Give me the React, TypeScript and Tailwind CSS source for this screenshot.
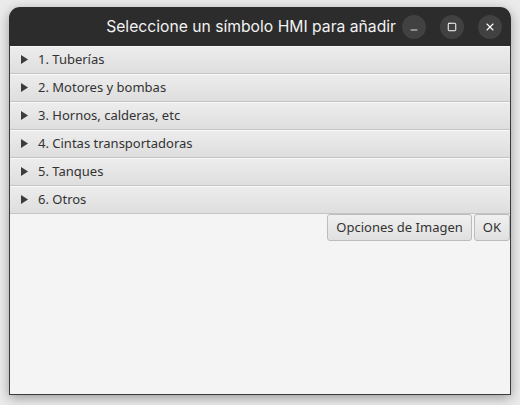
import { Minus, Square, X } from "lucide-react";

const SECTIONS = [
  "1. Tuberías",
  "2. Motores y bombas",
  "3. Hornos, calderas, etc",
  "4. Cintas transportadoras",
  "5. Tanques",
  "6. Otros",
];

function SectionHeader({ label }: { label: string }) {
  return (
    <div className="flex h-[28px] items-center border-b border-[#c4c4c4] bg-gradient-to-b from-[#ededed] to-[#dedede] pl-[11px] shadow-[inset_0_1px_0_#f8f8f8]">
      <svg width="7" height="9" viewBox="0 0 7 9" className="mr-[10px] shrink-0">
        <path d="M0 0 L7 4.5 L0 9 Z" fill="#3c3c3c" />
      </svg>
      <span className="text-[13px] text-[#333333]">{label}</span>
    </div>
  );
}

export default function App() {
  return (
    <div
      className="h-[405px] w-[520px] bg-[#ebebeb] pt-[7px] pl-[9px]"
      style={{ fontFamily: '"Noto Sans", "Open Sans", sans-serif' }}
    >
      <div className="flex h-[388px] w-[502px] flex-col overflow-hidden rounded-t-[11px] shadow-[0_3px_12px_rgba(0,0,0,0.35)]">
        <header className="flex h-[39px] shrink-0 items-center bg-[#2c2c2c] pr-[9px]">
          <div
            className="flex-1 pr-[6px] text-right text-[15.7px] text-[#f2f2f2]"
            style={{ fontFamily: 'Inter, "Noto Sans", sans-serif' }}
          >
            Seleccione un símbolo HMI para añadir
          </div>
          <div className="flex items-center gap-[14px]">
            <span className="flex size-[24px] items-center justify-center rounded-full bg-[#414141] text-white">
              <Minus className="size-[10px] translate-y-[3px]" strokeWidth={2} />
            </span>
            <span className="flex size-[24px] items-center justify-center rounded-full bg-[#414141] text-white">
              <Square className="size-[10px]" strokeWidth={2.4} />
            </span>
            <span className="flex size-[24px] items-center justify-center rounded-full bg-[#414141] text-white">
              <X className="size-[12px]" strokeWidth={2.2} />
            </span>
          </div>
        </header>
        <div className="flex flex-1 flex-col border-x border-b border-[#3a3a3a] bg-[#f4f4f4]">
          <div className="flex flex-col">
            {SECTIONS.map((s) => (
              <SectionHeader key={s} label={s} />
            ))}
          </div>
          <div className="flex justify-end gap-[2px]">
            <button className="h-[27px] rounded-[3px] border border-[#bcbcbc] bg-gradient-to-b from-[#f0f0f0] to-[#e0e0e0] px-[8px] pt-[1px] text-[13px] text-[#333333]">
              Opciones de Imagen
            </button>
            <button className="h-[27px] rounded-[3px] border border-[#bcbcbc] bg-gradient-to-b from-[#f0f0f0] to-[#e0e0e0] px-[8px] pt-[1px] text-[13px] text-[#333333]">
              OK
            </button>
          </div>
        </div>
      </div>
    </div>
  );
}
